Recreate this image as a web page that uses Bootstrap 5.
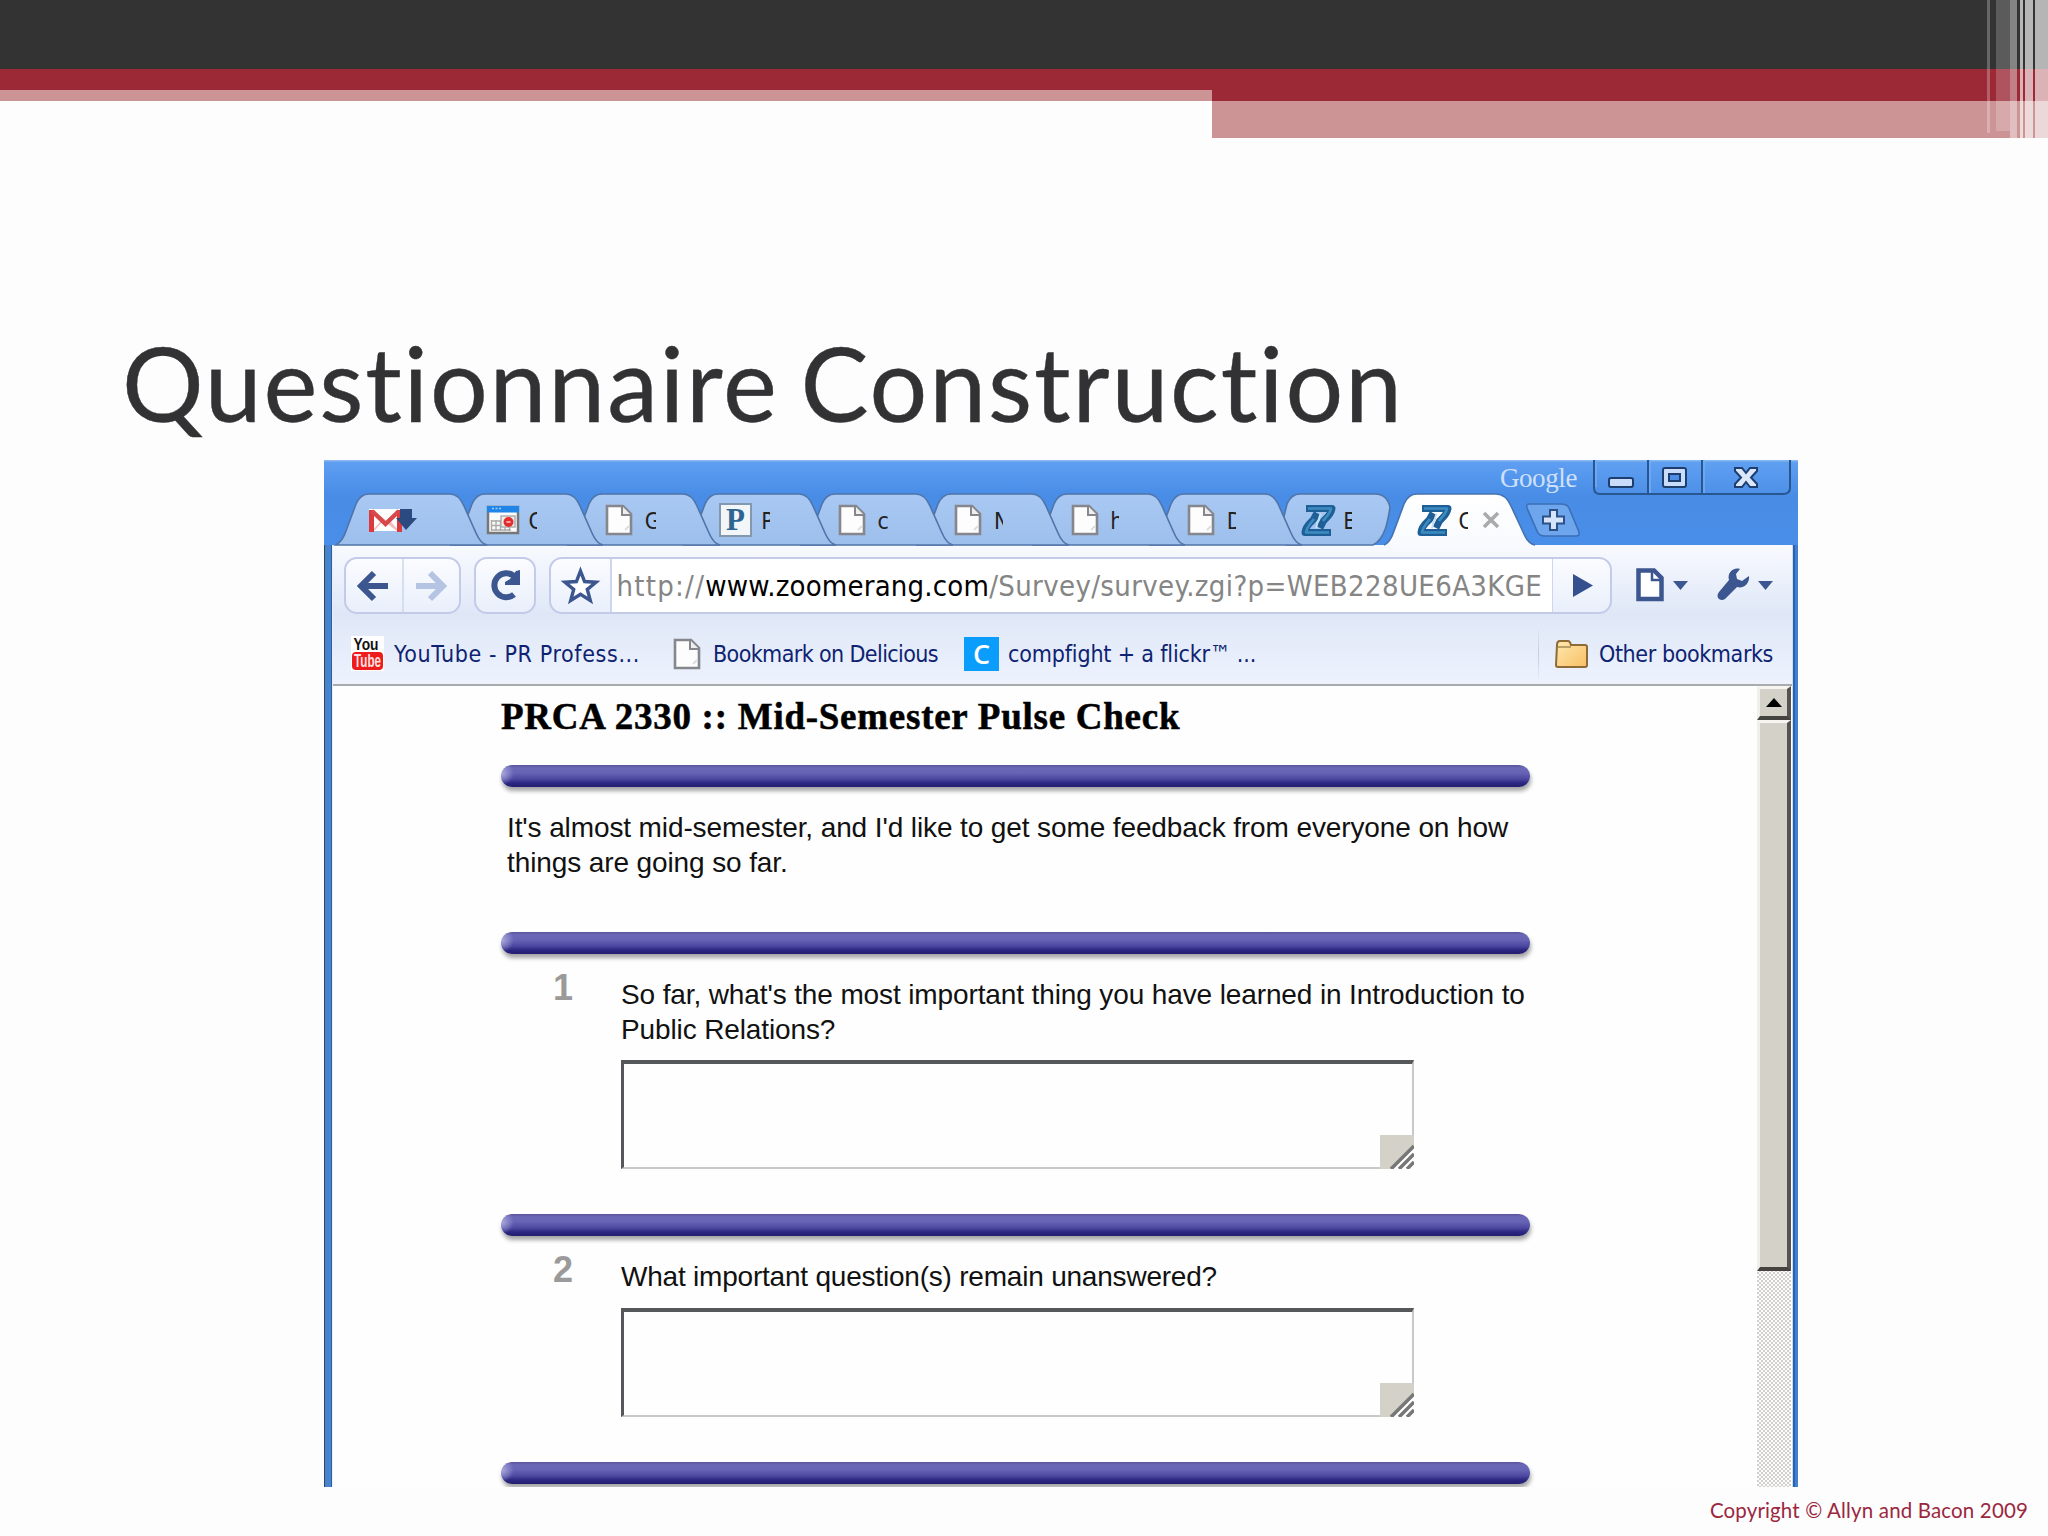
<!DOCTYPE html>
<html lang="en">
<head>
<meta charset="utf-8">
<meta name="viewport" content="width=device-width, initial-scale=1">
<title>Questionnaire Construction</title>
<link href="https://cdn.jsdelivr.net/npm/bootstrap@5.3.0/dist/css/bootstrap.min.css" rel="stylesheet">
<style>
  body { background: #fdfdfd; width: 2048px; height: 1536px; overflow: hidden; }
  .slide { width: 2048px; height: 1536px; }

  /* slide banner */
  .banner { height: 323px; }
  .band-dark { height: 69px; background: #333; }
  .band-left { width: 1212px; }
  .band-left .red { height: 21px; } .band-left .pink { height: 11px; }
  .band-right .red { height: 32px; } .band-right .pink { height: 37px; }
  .red { background: #9c2a36; }
  .pink { background: #cd9496; }
  .stripe { position: absolute; top: 0; background: #fff; }
  .slide-title { font: 400 102px/120px Lato, sans-serif; letter-spacing: 1.85px; word-spacing: -6px; -webkit-text-stroke: .4px #323234; color: #323234; padding-left: 122px; height: 137px; margin: 0; }
  .copyright { font: 400 20.5px/24px Lato, sans-serif; letter-spacing: .15px; color: #9b2740; padding: 11px 20px 0 0; }

  /* browser window */
  .browser { width: 1474px; height: 1027px; margin-left: 324px; overflow: hidden; }
  .frame-l { width: 9px; background: linear-gradient(90deg, #3a4450 0 1.5px, #4585cf 1.5px 7px, #2f5f9f 7px 8.5px, #e8eefa 8.5px); }
  .frame-r { width: 6px; background: linear-gradient(90deg, #c9dcf4 0 1px, #2c62ab 1px 3px, #4080cf 3px 5.5px, #cfe2f8 5.5px); }
  .titlebar { height: 85px; background: linear-gradient(#8ab8ee 0 1px, #5f9ff2 2px, #5597ee 16px, #488ce6 36px, #498ee8 85px); }
  .brand { font: 400 27px/30px "Liberation Serif", serif; letter-spacing: -.4px; color: #cfe0fa; margin-right: 16px; padding-top: 3px; }
  .win-btns { width: 199px; height: 35px; margin-right: 6px; }
  .tabstrip { height: 52px; padding-left: 12px; }
  .tab { position: relative; width: 116.4px; height: 52px; flex: none; }
  .tab .shape { position: absolute; left: 0; top: 0; width: 152px; height: 52px; overflow: visible; }
  .tab .face { position: relative; height: 52px; padding: 10px 0 0 34px; }
  .tab .tab-text { font: 400 23px/36px "DejaVu Sans Condensed", "DejaVu Sans", sans-serif; color: #222; width: 9px; height: 36px; overflow: hidden; display: block; }
  .tab svg { flex: none; display: block; }
  .tab-ico { width: 42px; height: 34px; }
  .tab-x { margin-left: 14px; }

  .toolbar { height: 69px; background: linear-gradient(#f8fafe, #dfe7f7); padding: 0 0 0 11px; }
  .pill { height: 57px; border: 2px solid #c3cbe8; border-radius: 13px; background: linear-gradient(#fbfcff, #e9effb); overflow: hidden; }
  .pill > div { height: 53px; }
  .vline { width: 1.5px; background: #cdd6ec; }
  .url { background: #fff; font: 400 29px/54px "DejaVu Sans Condensed", "DejaVu Sans", sans-serif; color: #858585; white-space: nowrap; padding-left: 6px; }
  .url .scheme { letter-spacing: 1.25px; } .url .path { letter-spacing: .36px; }
  .url .host { letter-spacing: .2px; color: #000; }

  .bookmarks { height: 72px; background: linear-gradient(#dfe7f7, #edf2fd); border-bottom: 2px solid #a9acac; font: 400 23px/36px "DejaVu Sans Condensed", "DejaVu Sans", sans-serif; color: #0d2371; white-space: nowrap; padding: 9px 0 0 18px; }
  .bm-line { width: 1.5px; height: 50px; background: linear-gradient(#dfe7f7, #c3cbdc, #e5ebf8); }

  /* survey page */
  .page { background: #fdfefd; color: #111; font: 400 28px/34.5px "Liberation Sans", sans-serif; }
  .survey { width: 1029px; margin-left: 168px; padding-top: 11px; white-space: nowrap; }
  .survey h1 { font: 700 37px/39px "Liberation Serif", serif; letter-spacing: .74px; -webkit-text-stroke: .5px #000; color: #000; margin: 0 0 29px; }
  .rule { height: 22px; border-radius: 11px; background: radial-gradient(circle at 1px 8px, #a9a8dc 0, #a9a8dc00 12px), linear-gradient(#5a5599 0, #6b68b8 3px, #6663b4 8px, #4c48a0 14px, #2c2882 18px, #241d6e 22px); box-shadow: 1px 4px 4px #0000005a; }
  .intro { margin: 24px 0 52px; padding-left: 6px; letter-spacing: -.11px; }
  .question { margin: 24px 0 45px; letter-spacing: -.12px; }
  .qnum { width: 120px; font: 700 36px/34.5px "Liberation Sans", sans-serif; color: #9a9a9a; padding-left: 52px; margin-top: -7px; }
  .tight { letter-spacing: -.21px; }
  .answer { width: 793px; height: 109px; margin-top: 13px; background: #fefefe; border: solid; border-width: 4px 2px 2px 3px; border-color: #56575a #c9c9c9 #c9c9c9 #56575a; }

  .scroll { width: 34px; margin-right: 1px; background: repeating-conic-gradient(#d3cfcb 0 25%, #fcfcfc 0 50%) 0 0/4px 4px; }
  .scroll .up, .scroll .thumb { background: #d4d1c9; border: solid; border-width: 3px 4px 4px 3px; border-color: #f6f5f2 #55534f #45433f #f0efec; }
  .scroll .up { height: 34px; } .scroll .thumb { height: 551px; }
</style>
<script src="https://cdn.jsdelivr.net/npm/bootstrap@5.3.0/dist/js/bootstrap.bundle.min.js"></script>
</head>
<body>
<svg width="0" height="0" class="position-absolute">
  <defs>
    <linearGradient id="gTab" x1="0" y1="0" x2="0" y2="1"><stop offset="0" stop-color="#a9c9f4"/><stop offset="1" stop-color="#9dbfeb"/></linearGradient>
    <linearGradient id="gFold" x1="0" y1="0" x2="1" y2="1"><stop offset="0" stop-color="#ffe9b0"/><stop offset="1" stop-color="#f7c065"/></linearGradient>
    <linearGradient id="gAct" x1="0" y1="0" x2="0" y2="1"><stop offset="0" stop-color="#fff"/><stop offset="1" stop-color="#f8fafe"/></linearGradient>
    <symbol id="tabshape" viewBox="0 0 152 52" overflow="visible"><path d="M0 52C5 49 8 44 10 38L20 11C23 4 27 1 33 1H114C121 1 125 6 128 13L140 40C143 47 146 51 151 52Z" fill="url(#gTab)" stroke="#4f74a8" stroke-width="1.6"/></symbol>
    <symbol id="page" viewBox="0 0 28 32"><path d="M2 2H18L26 10V30H2Z" fill="#fdfdfd" stroke="#85878c" stroke-width="2.6"/><path d="M17 2V11H26" fill="#eee" stroke="#85878c" stroke-width="2"/><path d="M20 26l4-4" stroke="#ddd" stroke-width="2"/></symbol>
    <symbol id="zed" viewBox="0 0 36 34">
      <g fill="none" stroke-linejoin="round">
        <path d="M5 5.500H31C30 12 26 14 22.500 18L19 25" stroke="#1d5f96" stroke-width="7"/>
        <path d="M30 29.500H4C4.500 23 9 20 12.500 16.500L16 10" stroke="#1d5f96" stroke-width="7"/>
        <path d="M7 5.500H30C29 11 25 14 22 18" stroke="#3c8cc2" stroke-width="2.600"/>
        <path d="M28 29.500H5C6 23 10 20 13 16" stroke="#3c8cc2" stroke-width="2.600"/>
        <path d="M20 11C16 14 20 16 17 18C14 21 18 22 14.500 25" stroke="#c5dff4" stroke-width="1.800"/>
      </g>
    </symbol>
  </defs>
</svg>

<main class="slide d-flex flex-column">
  <header class="banner position-relative flex-shrink-0">
    <div class="band-dark"></div>
    <div class="d-flex">
      <div class="band-left"><div class="red"></div><div class="pink"></div></div>
      <div class="band-right flex-fill"><div class="red"></div><div class="pink"></div></div>
    </div>
    <div class="stripe" style="left:1987px;width:3px;height:133px;opacity:.25"></div>
    <div class="stripe" style="left:1996px;width:14px;height:131px;opacity:.2"></div>
    <div class="stripe" style="left:2010px;width:7px;height:138px;opacity:.4"></div>
    <div class="stripe" style="left:2020px;width:3px;height:138px;opacity:.65"></div>
    <div class="stripe" style="left:2025px;width:8px;height:138px;opacity:.65"></div>
    <div class="stripe" style="left:2035px;width:13px;height:138px;opacity:.64"></div>
  </header>

  <h1 class="slide-title flex-shrink-0">Questionnaire Construction</h1>

  <section class="browser d-flex flex-column flex-shrink-0">
    <div class="titlebar flex-shrink-0">
      <div class="d-flex justify-content-end" style="height:33px">
        <div class="brand">Google</div>
        <svg class="win-btns" viewBox="0 0 199 35">
          <path d="M1 0V28Q1 34 7 34H190Q197 34 197 28V0M55 0V34M109 0V34" fill="#6aa5f220" stroke="#285690" stroke-width="2"/>
          <path d="M3 0V27M57 0V33M111 0V33" stroke="#74adf4" stroke-width="1.5"/>
          <rect x="16" y="18" width="24" height="9" rx="2" fill="#c9dcfa" stroke="#1e3e70" stroke-width="2"/>
          <rect x="70" y="8" width="23" height="19" rx="2" fill="#c9dcfa" stroke="#1e3e70" stroke-width="2"/><rect x="76" y="14" width="11" height="7" fill="#4c8de6" stroke="#1e3e70" stroke-width="2"/>
          <path d="M142 8H149L153 13L157 8H164V11L158 17.500L164 24V27H157L153 22L149 27H142V24L148 17.500L142 11Z" fill="#dbe7fb" stroke="#1e3e70" stroke-width="2"/>
        </svg>
      </div>
      <div class="tabstrip d-flex">
        <div class="tab" style="z-index:9"><svg class="shape"><use href="#tabshape"/></svg><div class="face d-flex">
          <svg width="50" height="34" viewBox="0 0 50 34" style="margin-left:-1px"><rect x="0" y="6" width="33" height="22" fill="#fff"/><path d="M5 27L13 18M28 27L20 18M5 9L28 27" stroke="#f3bdb8" stroke-width="1.8"/><path d="M2.500 29V7M30.500 7V29" stroke="#dc3a3c" stroke-width="5"/><path d="M3 8L16.500 21L30 8" fill="none" stroke="#d8484a" stroke-width="4.500"/><path d="M31 6H43V15H48L37 27L27 15H31Z" fill="#2a4a80"/></svg></div></div>
        <div class="tab" style="z-index:8"><svg class="shape"><use href="#tabshape"/></svg><div class="face d-flex">
          <svg class="tab-ico" viewBox="0 0 42 34"><rect x="2" y="4" width="30" height="26" fill="#fbfbfb" stroke="#777" stroke-width="2.5"/><rect x="1" y="3" width="32" height="6.500" fill="#1f85e8"/><path d="M6 5.500H15" stroke="#9fd0fb" stroke-width="1.500" stroke-dasharray="2 1.500"/><path d="M5 18H17M5 22.500H28M5 27H25M5.500 17V28M10 17V28M14.500 17V28M19 22V28M23.500 24V28" stroke="#aaa" stroke-width="1.400"/><rect x="15" y="13" width="14" height="11" fill="#eee" stroke="#aaa" stroke-width="1.400"/><circle cx="22.500" cy="19" r="5" fill="#e32c2c"/><path d="M20.500 19H24.500" stroke="#f6a5a5" stroke-width="2"/></svg><span class="tab-text">C</span></div></div>
        <div class="tab" style="z-index:7"><svg class="shape"><use href="#tabshape"/></svg><div class="face d-flex"><svg class="tab-ico" viewBox="0 0 42 34"><use href="#page" x="2" y="1" width="28" height="32"/></svg><span class="tab-text" style="width:11px">G</span></div></div>
        <div class="tab" style="z-index:6"><svg class="shape"><use href="#tabshape"/></svg><div class="face d-flex"><svg class="tab-ico" viewBox="0 0 42 34"><rect x="1" y="1" width="31" height="32" fill="#f3f6f8" stroke="#8397ae" stroke-width="2"/><text x="16.500" y="27" text-anchor="middle" font-family="Liberation Serif" font-weight="700" font-size="31" fill="#2d6593">P</text></svg><span class="tab-text">P</span></div></div>
        <div class="tab" style="z-index:5"><svg class="shape"><use href="#tabshape"/></svg><div class="face d-flex"><svg class="tab-ico" viewBox="0 0 42 34"><use href="#page" x="2" y="1" width="28" height="32"/></svg><span class="tab-text" style="width:12px">c</span></div></div>
        <div class="tab" style="z-index:4"><svg class="shape"><use href="#tabshape"/></svg><div class="face d-flex"><svg class="tab-ico" viewBox="0 0 42 34"><use href="#page" x="2" y="1" width="28" height="32"/></svg><span class="tab-text">N</span></div></div>
        <div class="tab" style="z-index:3"><svg class="shape"><use href="#tabshape"/></svg><div class="face d-flex"><svg class="tab-ico" viewBox="0 0 42 34"><use href="#page" x="3" y="1" width="28" height="32"/></svg><span class="tab-text">h</span></div></div>
        <div class="tab" style="z-index:2"><svg class="shape"><use href="#tabshape"/></svg><div class="face d-flex"><svg class="tab-ico" viewBox="0 0 42 34"><use href="#page" x="2" y="1" width="28" height="32"/></svg><span class="tab-text">D</span></div></div>
        <div class="tab" style="z-index:1"><svg class="shape"><path d="M12 44L20 11C23 4 27 1 33 1H108C116 1 121 6 123 14C121 28 118 46 106 52H20C16 50 14 48 12 44Z" fill="url(#gTab)" stroke="#4f74a8" stroke-width="1.6"/></svg><div class="face d-flex"><svg class="tab-ico" viewBox="0 0 42 34"><use href="#zed" width="36" height="34"/></svg><span class="tab-text">E</span></div></div>
        <div class="tab" style="z-index:10"><svg class="shape"><path d="M-1 53C5 50 8 44 10 38L20 11C23 4 27 1 33 1H112C119 1 124 6 127 13L140 41C143 48 146 51 153 53" fill="url(#gAct)"/><path d="M0 52C5 50 8 44 10 38L20 11C23 4 27 1 33 1H112C119 1 124 6 127 13L140 41C143 48 146 51 151 52" fill="none" stroke="#4473b0" stroke-width="1.600"/></svg><div class="face d-flex" style="margin-left:-1px"><svg class="tab-ico" viewBox="0 0 42 34"><use href="#zed" width="36" height="34"/></svg><span class="tab-text">C</span><svg class="tab-x" width="18" height="34" viewBox="0 0 18 34"><path d="M2 10L16 24M16 10L2 24" stroke="#aaa" stroke-width="3.600"/></svg></div></div>
        <svg class="flex-shrink-0" style="margin-left:25px;margin-top:9px" width="56" height="36" viewBox="0 0 56 36"><path d="M3 2H36Q42 2 44 6L54 30Q55 34 51 34H20Q14 34 12 29L2 6Q1 2 4 2Z" fill="#6ea6ee" stroke="#3b6fb8" stroke-width="1.600"/><path d="M25 8H32V14.500H39V21.500H32V28H25V21.500H18V14.500H25Z" fill="#d5e4fb" stroke="#2c5188" stroke-width="2"/></svg>
      </div>
    </div>

    <div class="d-flex flex-fill" style="min-height:0">
      <div class="frame-l flex-shrink-0"></div>
      <div class="d-flex flex-column flex-fill" style="min-width:0">
        <div class="toolbar d-flex align-items-center flex-shrink-0" style="padding-top:11px">
          <div class="pill d-flex" style="width:117px">
            <svg width="113" height="53" viewBox="0 0 113 53"><path d="M57 0V53" stroke="#cdd6ec" stroke-width="1.500"/><path d="M42 27H16M28 14L15 27L28 40" fill="none" stroke="#3c5690" stroke-width="6"/><path d="M70 27H96M84 14L97 27L84 40" fill="none" stroke="#b5c4e2" stroke-width="6"/></svg>
          </div>
          <div class="pill" style="width:62px;margin-left:13px">
            <svg width="58" height="53" viewBox="0 0 58 53"><path d="M38 17A12 12 0 1 0 38 35.500" fill="none" stroke="#3c5690" stroke-width="6"/><path d="M44 11V26H29V23L34 20L40 12Z" fill="#3c5690"/></svg>
          </div>
          <div class="pill d-flex" style="width:1063px;margin-left:13px">
            <svg class="flex-shrink-0" width="59" height="53" viewBox="0 0 59 53"><path d="M29.500 12L33.600 22.500L45 23.200L36.300 30.400L39.300 41.500L29.500 35.300L19.700 41.500L22.700 30.400L14 23.200L25.400 22.500Z" fill="#fff" stroke="#3c5690" stroke-width="3.400"/></svg>
            <div class="vline"></div>
            <div class="url flex-fill" style="padding-left:5px"><span class="scheme">http://</span><span class="host">www.zoomerang.com</span><span class="path">/Survey/survey.zgi?p=WEB228UE6A3KGE</span></div>
            <div class="vline"></div>
            <svg class="flex-shrink-0" width="57" height="53" viewBox="0 0 57 53"><path d="M20 15L40 26.500L20 38Z" fill="#34508f"/></svg>
          </div>
          <svg style="margin-left:24px" width="140" height="40" viewBox="0 0 140 40">
            <path d="M2.500 5.500H18L25.500 13V34H2.500Z" fill="#fff" stroke="#3c5690" stroke-width="4.500"/><path d="M16 5V15H26" fill="none" stroke="#3c5690" stroke-width="2.500"/>
            <path d="M37 16H52L44.500 25Z" fill="#3c5690"/>
            <path d="M104 4C97 2 91 8 93 15L83 27C79 32 84 37 89 34L101 22C108 24 114 18 113 11L106 16L101 14L100 9Z" fill="#3c5690"/>
            <path d="M122 16H137L129.500 25Z" fill="#3c5690"/>
          </svg>
        </div>
        <div class="bookmarks d-flex align-items-center flex-shrink-0">
          <svg width="34" height="36" viewBox="0 0 34 36"><rect width="33" height="35" y="0" fill="#fff"/><text x="15" y="14" text-anchor="middle" font-family="Liberation Sans" font-weight="700" font-size="17" textLength="25" lengthAdjust="spacingAndGlyphs" fill="#111">You</text><rect x="1" y="16" width="31" height="18" rx="4" fill="#ee1c1c"/><text x="16.500" y="31" text-anchor="middle" font-family="Liberation Sans" font-weight="700" font-size="18" textLength="27" lengthAdjust="spacingAndGlyphs" fill="#ffe0e0">Tube</text></svg>
          <span style="margin-left:9px;letter-spacing:.63px;width:246px">YouTube - PR Profess...</span>
          <svg style="margin-left:33px" width="28" height="32"><use href="#page"/></svg>
          <span style="margin-left:12px;letter-spacing:-.6px;width:225px">Bookmark on Delicious</span>
          <svg style="margin-left:26px" width="35" height="34" viewBox="0 0 35 34"><rect width="35" height="34" fill="#0a9dfb"/><text x="17.500" y="27" text-anchor="middle" font-family="Open Sans" font-weight="600" font-size="27" fill="#fff">C</text></svg>
          <span style="margin-left:9px;letter-spacing:-.16px;width:248px">compfight + a flickr™ ...</span>
          <div class="bm-line ms-auto"></div>
          <svg style="margin-left:16px" width="34" height="30" viewBox="0 0 34 30"><path d="M2 6Q2 2 5 2H13Q15 2 16 6H30Q32 6 32 8V26Q32 28 30 28H3Q1 28 1 26Z" fill="url(#gFold)" stroke="#8d6a36" stroke-width="2"/><path d="M3 8H16" stroke="#a58a50" stroke-width="1.500"/></svg>
          <span style="margin-left:10px;margin-right:19px;letter-spacing:-.39px;width:174px">Other bookmarks</span>
        </div>

        <div class="page d-flex flex-fill overflow-hidden">
          <div class="flex-fill">
            <div class="survey">
              <h1>PRCA 2330 :: Mid-Semester Pulse Check</h1>
              <div class="rule"></div>
              <p class="intro">It's almost mid-semester, and I'd like to get some feedback from everyone on how<br>things are going so far.</p>
              <div class="rule"></div>
              <div class="question d-flex">
                <div class="qnum flex-shrink-0">1</div>
                <div>So far, what's the most important thing you have learned in Introduction to<br>Public Relations?
                  <div class="answer d-flex justify-content-end align-items-end"><svg width="34" height="34" viewBox="0 0 34 34" style="margin:0 -2px -2px 0"><path d="M0 0H34V10L10 34H0Z" fill="#d4d1c8"/><path d="M10 34L34 10V34Z" fill="#fff"/><path d="M11 34L34 11M19 34L34 19M27 34L34 27" stroke="#777" stroke-width="3.500"/></svg></div>
                </div>
              </div>
              <div class="rule"></div>
              <div class="question d-flex">
                <div class="qnum flex-shrink-0">2</div>
                <div class="tight">What important question(s) remain unanswered?
                  <div class="answer d-flex justify-content-end align-items-end"><svg width="34" height="34" viewBox="0 0 34 34" style="margin:0 -2px -2px 0"><path d="M0 0H34V10L10 34H0Z" fill="#d4d1c8"/><path d="M10 34L34 10V34Z" fill="#fff"/><path d="M11 34L34 11M19 34L34 19M27 34L34 27" stroke="#777" stroke-width="3.500"/></svg></div>
                </div>
              </div>
              <div class="rule"></div>
            </div>
          </div>
          <div class="scroll flex-shrink-0">
            <div class="up d-flex justify-content-center align-items-center"><svg width="16" height="9"><path d="M0 9L8 0L16 9Z" fill="#000"/></svg></div>
            <div class="thumb"></div>
          </div>
        </div>
      </div>
      <div class="frame-r flex-shrink-0"></div>
    </div>
  </section>

  <footer class="copyright text-end">Copyright © Allyn and Bacon 2009</footer>
</main>
</body>
</html>
